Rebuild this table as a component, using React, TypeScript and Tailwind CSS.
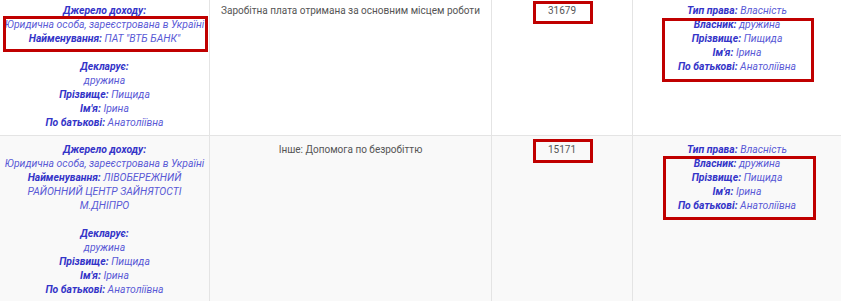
import React from "react";

const L = ({ children }: { children: React.ReactNode }) => (
  <span className="font-bold text-[#3434c8]">{children}</span>
);
const V = ({ children }: { children: React.ReactNode }) => (
  <span className="text-[#5a5ad6]">{children}</span>
);

const Box = ({ className }: { className: string }) => (
  <div className={"pointer-events-none absolute border-[3px] border-[#c00000] " + className} />
);

export default function App() {
  return (
    <div className="w-[841px] h-[301px] overflow-hidden bg-white font-['Roboto',sans-serif] text-[10.4px] leading-[14px] italic">
      {/* Row 1 */}
      <div className="flex h-[136px] border-b border-[#e4e4e4] bg-white">
        <div className="w-[210px] shrink-0 border-r border-[#e4e4e4] pt-[4px] text-center whitespace-nowrap">
          <p><L>Джерело доходу:</L></p>
          <div className="relative">
            <p><V>Юридична особа, зареєстрована в Україні</V></p>
            <p><L>Найменування:</L> <V>ПАТ "ВТБ БАНК"</V></p>
            <Box className="-top-[2px] -bottom-[6px] left-[3px] right-[1px]" />
          </div>
          <div className="mt-[14px]">
            <p><L>Декларує:</L></p>
            <p><V>дружина</V></p>
            <p><L>Прізвище:</L> <V>Пищида</V></p>
            <p><L>Ім'я:</L> <V>Ірина</V></p>
            <p><L>По батькові:</L> <V>Анатоліївна</V></p>
          </div>
        </div>
        <div className="w-[282px] shrink-0 border-r border-[#e4e4e4] pt-[4px] text-center not-italic text-[10px] text-[#555555] whitespace-nowrap">
          Заробітна плата отримана за основним місцем роботи
        </div>
        <div className="relative w-[141px] shrink-0 border-r border-[#e4e4e4] pt-[4px] text-center not-italic text-[10px] text-[#555555]">
          <div className="relative">
            31679
            <Box className="-top-[3px] -bottom-[6px] left-[41px] w-[60px]" />
          </div>
        </div>
        <div className="flex-1 pt-[4px] text-center whitespace-nowrap">
          <p><L>Тип права:</L> <V>Власність</V></p>
          <div className="relative">
            <p><L>Власник:</L> <V>дружина</V></p>
            <p><L>Прізвище:</L> <V>Пищида</V></p>
            <p><L>Ім'я:</L> <V>Ірина</V></p>
            <p><L>По батькові:</L> <V>Анатоліївна</V></p>
            <Box className="top-0 -bottom-[8px] left-[29px] right-[27px]" />
          </div>
        </div>
      </div>
      {/* Row 2 */}
      <div className="flex h-[165px] bg-[#f9f9f9]">
        <div className="w-[210px] shrink-0 border-r border-[#e4e4e4] pt-[7px] text-center whitespace-nowrap">
          <p><L>Джерело доходу:</L></p>
          <p><V>Юридична особа, зареєстрована в Україні</V></p>
          <p><L>Найменування:</L> <V>ЛІВОБЕРЕЖНИЙ</V></p>
          <p><V>РАЙОННИЙ ЦЕНТР ЗАЙНЯТОСТІ</V></p>
          <p><V>М.ДНІПРО</V></p>
          <div className="mt-[14px]">
            <p><L>Декларує:</L></p>
            <p><V>дружина</V></p>
            <p><L>Прізвище:</L> <V>Пищида</V></p>
            <p><L>Ім'я:</L> <V>Ірина</V></p>
            <p><L>По батькові:</L> <V>Анатоліївна</V></p>
          </div>
        </div>
        <div className="w-[282px] shrink-0 border-r border-[#e4e4e4] pt-[7px] text-center not-italic text-[10px] text-[#555555] whitespace-nowrap">
          Інше: Допомога по безробіттю
        </div>
        <div className="w-[141px] shrink-0 border-r border-[#e4e4e4] pt-[7px] text-center not-italic text-[10px] text-[#555555]">
          <div className="relative">
            15171
            <Box className="-top-[4px] -bottom-[6px] left-[41px] w-[60px]" />
          </div>
        </div>
        <div className="flex-1 pt-[7px] text-center whitespace-nowrap">
          <p><L>Тип права:</L> <V>Власність</V></p>
          <div className="relative">
            <p><L>Власник:</L> <V>дружина</V></p>
            <p><L>Прізвище:</L> <V>Пищида</V></p>
            <p><L>Ім'я:</L> <V>Ірина</V></p>
            <p><L>По батькові:</L> <V>Анатоліївна</V></p>
            <Box className="-top-[1px] -bottom-[7px] left-[30px] right-[25px]" />
          </div>
        </div>
      </div>
    </div>
  );
}
